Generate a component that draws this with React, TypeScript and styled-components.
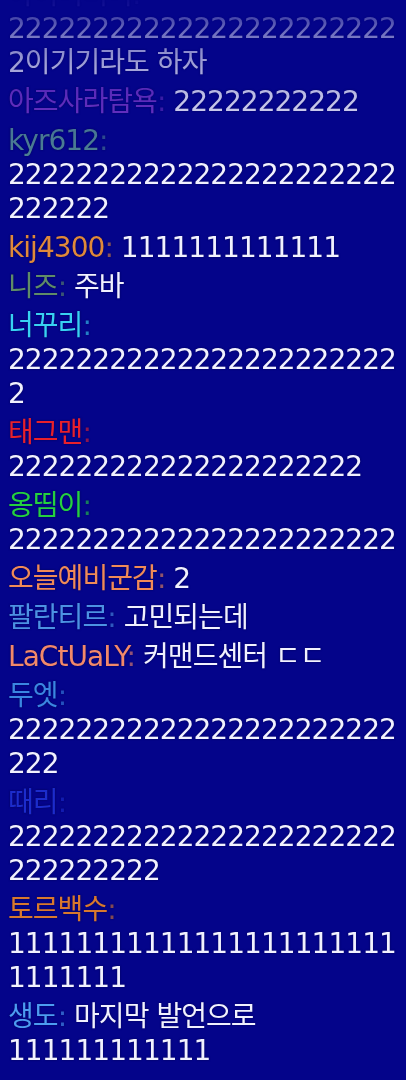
import React from "react";
import styled, { createGlobalStyle } from "styled-components";

const GlobalStyle = createGlobalStyle`
  html, body {
    margin: 0;
    padding: 0;
    background: #04048a;
  }
  #root {
    width: 100%;
  }
`;

const Screen = styled.div`
  box-sizing: border-box;
  height: 100vh;
  width: 100%;
  overflow: hidden;
  display: flex;
  flex-direction: column;
  justify-content: flex-end;
  gap: 5px;
  padding: 0 8px 12px 8px;
  -webkit-mask-image: linear-gradient(
    to bottom,
    rgba(0, 0, 0, 0.08) 0px,
    rgba(0, 0, 0, 0.22) 12px,
    rgba(0, 0, 0, 0.45) 32px,
    rgba(0, 0, 0, 0.66) 65px,
    rgba(0, 0, 0, 0.8) 100px,
    rgba(0, 0, 0, 1) 165px
  );
  mask-image: linear-gradient(
    to bottom,
    rgba(0, 0, 0, 0.08) 0px,
    rgba(0, 0, 0, 0.22) 12px,
    rgba(0, 0, 0, 0.45) 32px,
    rgba(0, 0, 0, 0.66) 65px,
    rgba(0, 0, 0, 0.8) 100px,
    rgba(0, 0, 0, 1) 165px
  );
`;

const Message = styled.p`
  margin: 0;
  flex: none;
  font-family: "DejaVu Sans", "Noto Sans CJK KR", sans-serif;
  font-size: 28px;
  letter-spacing: -0.95px;
  line-height: 34px;
  color: #f1f1ff;
  overflow-wrap: break-word;
  text-shadow: 0 0 2px rgba(0, 0, 40, 0.6);
`;

const Name = styled.span<{ $color: string }>`
  color: ${(p) => p.$color};
`;

const Colon = styled.span<{ $color: string }>`
  color: ${(p) => p.$color};
  opacity: 0.6;
`;

type Chat = { name: string; color: string; text: string };

const rep = (c: string, n: number) => c.repeat(n);

const chats: Chat[] = [
  { name: "아이니미니", color: "#6a5ad0", text: rep("2", 24) + "이기기라도 하자" },
  { name: "아즈사라탐욕", color: "#7436c8", text: rep("2", 11) },
  { name: "kyr612", color: "#4f8494", text: rep("2", 29) },
  { name: "kij4300", color: "#e0893a", text: rep("1", 13) },
  { name: "니즈", color: "#5f8c68", text: "주바" },
  { name: "너꾸리", color: "#38d2f2", text: rep("2", 24) },
  { name: "태그맨", color: "#e8202c", text: rep("2", 21) },
  { name: "옹띰이", color: "#24d040", text: rep("2", 23) },
  { name: "오늘예비군감", color: "#f08a58", text: "2" },
  { name: "팔란티르", color: "#4c92e4", text: "고민되는데" },
  { name: "LaCtUaLY", color: "#f2886a", text: "커맨드센터 ㄷㄷ" },
  { name: "두엣", color: "#3a86e2", text: rep("2", 26) },
  { name: "때리", color: "#1c2ccc", text: rep("2", 32) },
  { name: "토르백수", color: "#d8782e", text: rep("1", 30) },
  { name: "생도", color: "#4c9cf2", text: "마지막 발언으로 " + rep("1", 12) },
];

export default function App() {
  return (
    <>
      <GlobalStyle />
      <Screen>
        {chats.map((c, i) => (
          <Message key={i}>
            <Name $color={c.color}>{c.name}</Name>
            <Colon $color={c.color}>:</Colon> {c.text}
          </Message>
        ))}
      </Screen>
    </>
  );
}
